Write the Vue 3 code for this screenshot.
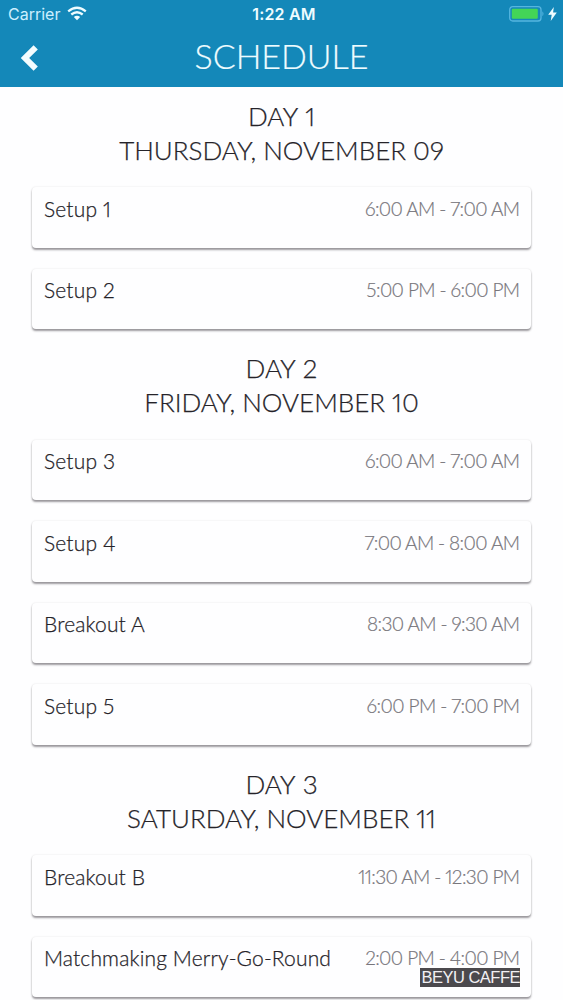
<template>
  <div class="phone">
    <header class="nav">
      <div class="status-bar">
        <div class="status-left">
          <span class="carrier">Carrier</span>
          <svg class="wifi" width="20" height="15" viewBox="0 0 20 15">
            <path d="M1.2 5.3 Q10 -1.8 18.8 5.3" />
            <path d="M4.3 8.5 Q10 4 15.7 8.5" />
            <path class="solid" d="M6.8 11 Q10 8.3 13.2 11 L10 14.2 Z" />
          </svg>
        </div>
        <span class="clock">1:22 AM</span>
        <div class="status-right">
          <svg width="36" height="16" viewBox="0 0 36 16">
            <rect class="battery-case" x="0.7" y="0.7" width="31.3" height="14.3" rx="3" />
            <rect class="battery-level" x="2.8" y="2.8" width="26" height="10" rx="1" />
            <path class="battery-tip" d="M33.4 5.3 Q35.6 7.8 33.4 10.3 Z" />
          </svg>
          <svg class="bolt" width="9" height="14" viewBox="0 0 9 14">
            <path d="M5.8 0 L0.2 7.8 H3.7 L2.7 14 L8.8 5.6 H5.1 Z" />
          </svg>
        </div>
      </div>
      <div class="title-bar">
        <button class="back" aria-label="Back">
          <svg width="20" height="28" viewBox="0 0 20 28">
            <path d="M15.7 3.3 L5 14 L15.7 24.7" />
          </svg>
        </button>
        <h1>SCHEDULE</h1>
      </div>
    </header>

    <main class="schedule">
      <section v-for="(day, index) in days" :key="day.date" class="day">
        <h2>
          <span class="day-number">DAY {{ index + 1 }}</span>
          <span class="day-date">{{ day.date }}</span>
        </h2>
        <div v-for="event in day.events" :key="event.name" class="card">
          <span class="name">{{ event.name }}</span>
          <div class="details">
            <span class="time">{{ event.time }}</span>
            <span v-if="event.location" class="location">{{ event.location }}</span>
          </div>
        </div>
      </section>
    </main>
  </div>
</template>

<script setup>
const days = [
  {
    date: 'THURSDAY, NOVEMBER 09',
    events: [
      { name: 'Setup 1', time: '6:00 AM - 7:00 AM' },
      { name: 'Setup 2', time: '5:00 PM - 6:00 PM' }
    ]
  },
  {
    date: 'FRIDAY, NOVEMBER 10',
    events: [
      { name: 'Setup 3', time: '6:00 AM - 7:00 AM' },
      { name: 'Setup 4', time: '7:00 AM - 8:00 AM' },
      { name: 'Breakout A', time: '8:30 AM - 9:30 AM' },
      { name: 'Setup 5', time: '6:00 PM - 7:00 PM' }
    ]
  },
  {
    date: 'SATURDAY, NOVEMBER 11',
    events: [
      { name: 'Breakout B', time: '11:30 AM - 12:30 PM' },
      { name: 'Matchmaking Merry-Go-Round', time: '2:00 PM - 4:00 PM', location: 'BEYU CAFFE' }
    ]
  }
]
</script>

<style>
body { margin: 0; background: #fefeff; overflow: hidden; }
</style>

<style scoped>
.phone { height: 1000px; overflow: hidden; background: #fefeff; font-family: Lato, "Open Sans", sans-serif; font-weight: 300; font-variant-numeric: proportional-nums; color: #252329; }
.nav { height: 87px; background: #1488b9; color: #eefcff; }
.status-bar { display: grid; grid-template-columns: 1fr auto 1fr; align-items: center; height: 28px; padding: 0 6px 0 8px; font-family: Inter, sans-serif; }
.status-left, .status-right { display: flex; align-items: center; }
.status-left { gap: 7px; }
.status-right { justify-content: flex-end; gap: 3px; }
.carrier { font-size: 16px; font-weight: 400; letter-spacing: 0; color: #ccefff; }
.clock { padding-left: 3px; font-size: 16px; font-weight: 600; letter-spacing: 0.2px; }
.wifi { margin-top: -1px; }
.wifi path { fill: none; stroke: #eefcff; stroke-width: 2.3; }
.wifi .solid { fill: #eefcff; stroke: none; }
.battery-case { fill: none; stroke: #55b5e0; stroke-width: 1.3; }
.battery-level { fill: #43d557; }
.battery-tip { fill: #55b5e0; }
.bolt { fill: #eefcff; }
.title-bar { display: grid; grid-template-columns: 60px 1fr 60px; align-items: center; height: 59px; }
.title-bar h1 { margin: -4px 0 0; font-size: 34px; font-weight: 300; line-height: 58px; text-align: center; white-space: nowrap; -webkit-text-stroke: 0.2px; }
.back { display: flex; margin: 0 0 0 20px; padding: 0; border: 0; background: none; }
.back path { fill: none; stroke: #f4fdff; stroke-width: 6; }
.schedule { padding: 11.6px 32px 0; }
.day { padding-bottom: 1px; }
.day h2 { display: flex; flex-direction: column; align-items: center; margin: 0 0 20.6px; font-size: 26px; font-weight: 300; line-height: 34px; white-space: nowrap; -webkit-text-stroke: 0.25px; }
.day-number { word-spacing: 1px; }
.card { display: flex; justify-content: space-between; box-sizing: border-box; height: 60.4px; margin-bottom: 21.1px; padding: 7.4px 12px 0; border-radius: 4px; background: #fefeff; box-shadow: 0 2px 2px rgba(40, 35, 45, 0.45), 0 0 2px rgba(40, 35, 45, 0.12); white-space: nowrap; }
.name { font-size: 21px; line-height: 28px; letter-spacing: 0.15px; -webkit-text-stroke: 0.25px; }
.details { display: flex; flex-direction: column; align-items: flex-end; }
.time { margin-right: -0.5px; font-size: 19px; line-height: 28px; letter-spacing: -0.6px; color: #77757b; -webkit-text-stroke: 0.2px; }
.location { margin: -4px -1px 0; padding: 0 0 0 1px; font-family: "Liberation Sans", Arial, sans-serif; font-size: 16.5px; font-weight: 400; line-height: 19px; letter-spacing: -0.5px; background: #4b494d; color: #f2f0f3; }
</style>
